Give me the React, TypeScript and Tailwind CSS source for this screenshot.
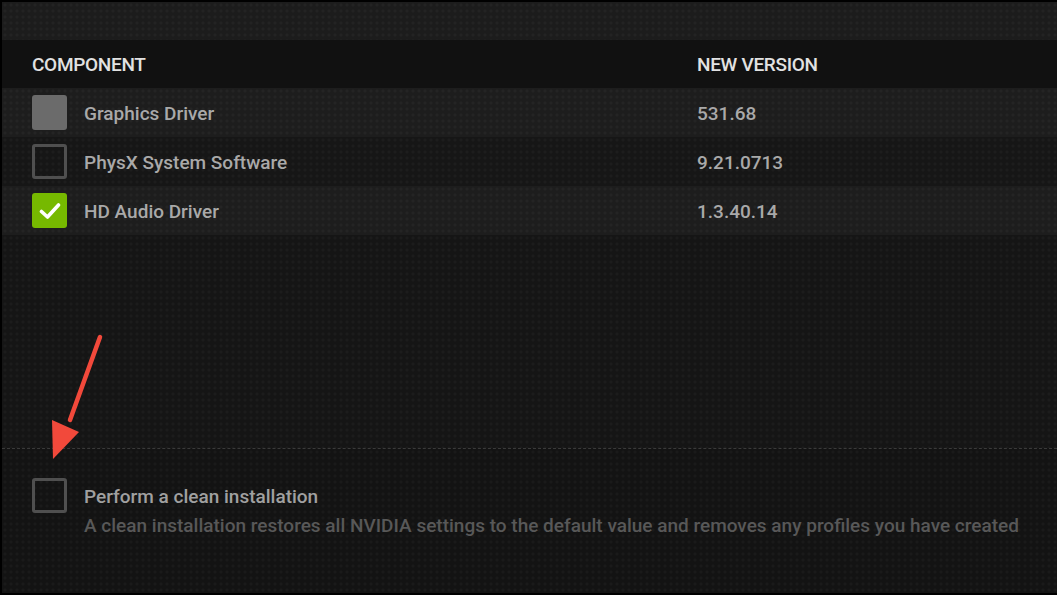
import React from "react";

const pattern =
  "bg-[radial-gradient(circle,rgba(255,255,255,0.03)_1.2px,transparent_1.8px)] bg-[length:6px_6px]";

type Row = { name: string; version: string; state: "locked" | "off" | "on" };

const rows: Row[] = [
  { name: "Graphics Driver", version: "531.68", state: "locked" },
  { name: "PhysX System Software", version: "9.21.0713", state: "off" },
  { name: "HD Audio Driver", version: "1.3.40.14", state: "on" },
];

const Box = ({ state }: { state: Row["state"] }) => {
  if (state === "locked") {
    return <div className="w-[35px] h-[35px] rounded-[3px] bg-[#6b6b6b] shrink-0" />;
  }
  if (state === "on") {
    return (
      <div className="w-[35px] h-[35px] rounded-[3px] bg-[#76b900] shrink-0 flex items-center justify-center">
        <svg width="22" height="18" viewBox="0 0 22 18">
          <path d="M2.5 9.5 L8.5 15 L19.5 3" fill="none" stroke="#fff" strokeWidth="3.6" strokeLinecap="round" strokeLinejoin="round" />
        </svg>
      </div>
    );
  }
  return <div className="w-[35px] h-[35px] rounded-[3px] border-[3px] border-[#4f4f4f] shrink-0" />;
};

const App = () => {
  return (
    <div className="relative w-[1057px] h-[595px] bg-black pl-[2px] pt-[2px] pb-[2px] overflow-hidden font-['Roboto',_'Liberation_Sans',_sans-serif]">
      <div className="w-full h-full flex flex-col bg-[#141414]">
        {/* top band */}
        <div className={`h-[38px] bg-[#1c1c1c] ${pattern}`} />

        {/* header */}
        <div className="h-[48px] bg-[#111111] flex items-center pl-[30px] pt-[2px] text-[19px] font-medium text-[#e2e2e2] tracking-[-0.3px]">
          <div className="w-[665px]">COMPONENT</div>
          <div>NEW VERSION</div>
        </div>

        {/* rows */}
        {rows.map((r, i) => (
          <div
            key={r.name}
            className={`h-[49px] flex items-center pl-[30px] text-[19px] font-medium text-[#a9a9a9] ${
              i === 1 ? "bg-[#161616]" : "bg-[#1d1d1d]"
            } ${pattern}`}
          >
            <div className="w-[665px] flex items-center gap-[17px]">
              <Box state={r.state} />
              <span className="mt-[4px]">{r.name}</span>
            </div>
            <div className="mt-[4px]">{r.version}</div>
          </div>
        ))}

        {/* empty area */}
        <div className={`h-[213px] bg-[#151515] ${pattern}`} />

        {/* separator */}
        <div className="border-t border-dashed border-[#3a3a3a]" />

        {/* clean install */}
        <div className={`flex-1 bg-[#131313] pl-[30px] pt-[29px] ${pattern}`}>
          <div className="flex gap-[17px]">
            <Box state="off" />
            <div className="pt-[6px]">
              <div className="text-[19px] font-medium text-[#a0a0a0] leading-[26px]">Perform a clean installation</div>
              <div className="text-[19px] font-medium text-[#585858] leading-[26px] mt-[3px]">
                A clean installation restores all NVIDIA settings to the default value and removes any profiles you have created
              </div>
            </div>
          </div>
        </div>
      </div>

      {/* annotation arrow */}
      <svg className="absolute left-0 top-0 pointer-events-none" width="1057" height="595">
        <line x1="100" y1="337" x2="70" y2="420" stroke="#f2493b" strokeWidth="4.5" strokeLinecap="round" />
        <polygon points="52,420 79,432 53,459" fill="#f2493b" />
      </svg>
    </div>
  );
};

export default App;
